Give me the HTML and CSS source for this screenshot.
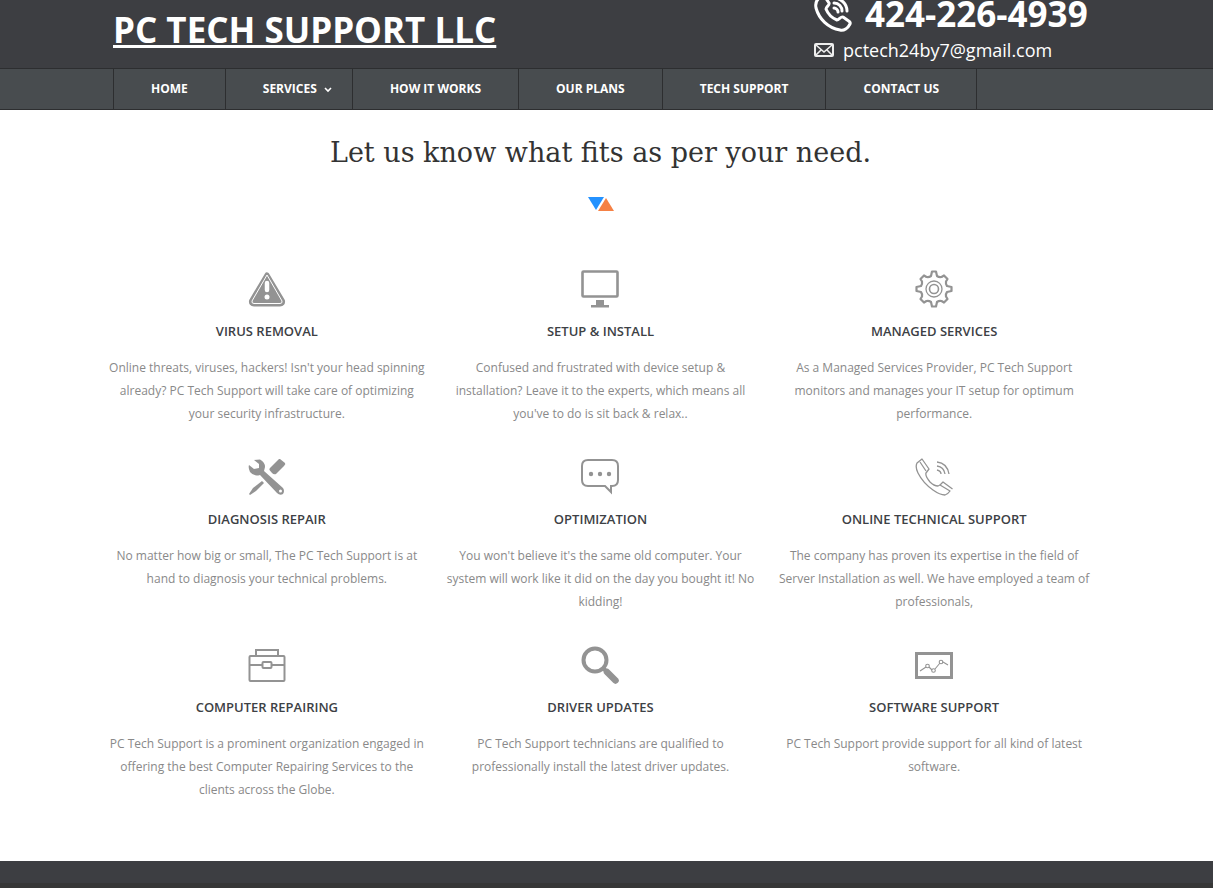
FILE: index.html
```html
<!DOCTYPE html>
<html lang="en">
<head>
<meta charset="utf-8">
<title>PC Tech Support LLC</title>
<link rel="stylesheet" href="styles.css">
</head>
<body>
<header class="header">
  <div class="container header-row">
    <a class="logo" href="#">PC TECH SUPPORT LLC</a>
    <div class="contact">
      <a class="phone" href="tel:4242264939">
        <svg class="phone-icon" viewBox="0 0 38 38" fill="none" stroke="#fff" stroke-width="3" stroke-linejoin="round" stroke-linecap="round"><path d="M7 3C3 5 1 9 2 14C5 25 14 34 26 36C30 37 34 34 36 30C37 28 35 27 29 23C27 22 25 26 23 26C18 24 14 20 12 15C12 13 16 11 15 9L11 3C10 1 9 2 7 3Z"/><path d="M20 4C27 4 33 10 33 17M20 9C25 9 28 13 28 17M20 14C22 14 24 16 24 18"/></svg>
        <span>424-226-4939</span>
      </a>
      <a class="email" href="mailto:pctech24by7@gmail.com">
        <svg class="email-icon" viewBox="0 0 20 14" fill="none" stroke="#eee" stroke-width="2"><rect x="1" y="1" width="18" height="12" rx="1"/><path d="M2 2L10 9L18 2M2 12L7 7M18 12L13 7" stroke-width="1.6"/></svg>
        <span>pctech24by7@gmail.com</span>
      </a>
    </div>
  </div>
</header>
<nav class="nav">
  <div class="container menu">
    <a href="#">HOME</a>
    <a class="has-menu" href="#">SERVICES <svg class="chevron" viewBox="0 0 8 6" fill="none" stroke="#fff" stroke-width="1.6"><path d="M1 1L4 4L7 1"/></svg></a>
    <a href="#">HOW IT WORKS</a>
    <a href="#">OUR PLANS</a>
    <a href="#">TECH SUPPORT</a>
    <a href="#">CONTACT US</a>
  </div>
</nav>
<main class="main">
  <h1 class="title">Let us know what fits as per your need.</h1>
  <svg class="divider" viewBox="0 0 26 14"><path d="M0 0H16L8 13Z" fill="#2492ff"/><path d="M10 14L18 1L26 14Z" fill="#f58145"/></svg>
  <div class="grid">
    <section class="card">
      <svg class="icon" viewBox="0 0 38 38"><path d="M19 5L34.500 31Q35 34 32 34H6Q3 34 3.500 31Z" fill="none" stroke="#939393" stroke-width="5" stroke-linejoin="round"/><path d="M19 5L34 31Q34.500 33.500 32 33.500H6Q3.500 33.500 4 31Z" fill="#939393" stroke="#fff" stroke-width="1" stroke-linejoin="round"/><path d="M19 13V20" stroke="#fff" stroke-width="4.500" stroke-linecap="round"/><circle cx="19" cy="27" r="2.500" fill="#fff"/></svg>
      <h2>VIRUS REMOVAL</h2>
      <p>Online threats, viruses, hackers! Isn't your head spinning already? PC Tech Support will take care of optimizing your security infrastructure.</p>
    </section>
    <section class="card">
      <svg class="icon" viewBox="0 0 38 38"><rect x="1.500" y="1.500" width="35" height="25" rx="1" fill="none" stroke="#939393" stroke-width="2.600"/><path d="M15 30H23V35H28V37.500H10V35H15Z" fill="#939393"/></svg>
      <h2>SETUP &amp; INSTALL</h2>
      <p>Confused and frustrated with device setup &amp; installation? Leave it to the experts, which means all you've to do is sit back &amp; relax..</p>
    </section>
    <section class="card">
      <svg class="icon" viewBox="0 0 38 38" fill="none" stroke="#939393" stroke-width="2.200" stroke-linejoin="round"><path d="M16 6L17 1.500H21L22 6Q24 7.500 26.500 7L29 5.500L32.500 9L31 11.500Q30.500 14 32 16L36.500 17V21L32 22Q30.500 24 31 26.500L32.500 29L29 32.500L26.500 31Q24 30.500 22 32L21 36.500H17L16 32Q14 30.500 11.500 31L9 32.500L5.500 29L7 26.500Q7.500 24 6 22L1.500 21V17L6 16Q7.500 14 7 11.500L5.500 9L9 5.500L11.500 7Q14 7.500 16 6Z"/><circle cx="19" cy="19" r="8" stroke-width="1.300"/><circle cx="19" cy="19" r="4.500" stroke-width="1.600"/></svg>
      <h2>MANAGED SERVICES</h2>
      <p>As a Managed Services Provider, PC Tech Support monitors and manages your IT setup for optimum performance.</p>
    </section>
    <section class="card">
      <svg class="icon" viewBox="0 0 38 38" fill="#939393"><path d="M6 2L12 1.500Q17 4 17 9L16 13L35 30Q37 33 35 36Q32 38 29 35L12 17Q6 19 2 14Q0 10 1 7L6 11L11 10L11 6Z"/><circle cx="32.500" cy="33" r="1.500" fill="#fff"/><path d="M32 1L37 5Q38 6 36 8L28 16Q26 17 24 15L21.500 12Q21 11 22 10L31 1Z"/><path d="M14 23L16 25L8 33L2 37L1 36L5 30Z"/></svg>
      <h2>DIAGNOSIS REPAIR</h2>
      <p>No matter how big or small, The PC Tech Support is at hand to diagnosis your technical problems.</p>
    </section>
    <section class="card">
      <svg class="icon" viewBox="0 0 38 38"><path d="M7 2H31Q37 2 37 8V22Q37 28 31 28H30V34L24 28H7Q1 28 1 22V8Q1 2 7 2Z" fill="none" stroke="#939393" stroke-width="2"/><g fill="#939393"><circle cx="10" cy="16" r="2.200"/><circle cx="19" cy="16" r="2.200"/><circle cx="28" cy="16" r="2.200"/></g></svg>
      <h2>OPTIMIZATION</h2>
      <p>You won't believe it's the same old computer. Your system will work like it did on the day you bought it! No kidding!</p>
    </section>
    <section class="card">
      <svg class="icon" viewBox="0 0 38 38" fill="none" stroke="#939393" stroke-width="1.300" stroke-linejoin="round"><path d="M7 1L2 5Q0 9 3 15Q8 25 18 32Q25 37 30 37Q33 36 35 33L25 27L23 28Q19 28 15 24Q10 18 11 15L14 11Z"/><path d="M5 4L11 13M25 27L28 24L37.500 31M22 4Q32 5 34 16M22 8Q29 9 30 16M22 12Q26 13 26 16"/></svg>
      <h2>ONLINE TECHNICAL SUPPORT</h2>
      <p>The company has proven its expertise in the field of Server Installation as well. We have employed a team of professionals,</p>
    </section>
    <section class="card">
      <svg class="icon" viewBox="0 0 38 38" fill="none" stroke="#939393" stroke-width="2"><rect x="1.500" y="10" width="35" height="25" rx="1"/><path d="M8 10V4H30V10M1 19H14M24 19H37"/><rect x="14.500" y="16" width="9" height="6" rx="1"/></svg>
      <h2>COMPUTER REPAIRING</h2>
      <p>PC Tech Support is a prominent organization engaged in offering the best Computer Repairing Services to the clients across the Globe.</p>
    </section>
    <section class="card">
      <svg class="icon" viewBox="0 0 38 38" fill="none" stroke="#939393"><circle cx="14" cy="14" r="11.500" stroke-width="4"/><path d="M22 22L25 25" stroke-width="4"/><path d="M26 26L34.500 34.500" stroke-width="6.500" stroke-linecap="round"/></svg>
      <h2>DRIVER UPDATES</h2>
      <p>PC Tech Support technicians are qualified to professionally install the latest driver updates.</p>
    </section>
    <section class="card">
      <svg class="icon" viewBox="0 0 38 38" fill="none" stroke="#939393"><rect x="1.500" y="7.500" width="35" height="24" stroke-width="3"/><g stroke-width="1.100"><path d="M5 25L11 21M14 21L17 24M20 23L25 17M28 16L33 19"/><circle cx="12.500" cy="20" r="1.800"/><circle cx="18.500" cy="24.500" r="1.800"/><circle cx="26" cy="16" r="1.800"/></g></svg>
      <h2>SOFTWARE SUPPORT</h2>
      <p>PC Tech Support provide support for all kind of latest software.</p>
    </section>
  </div>
</main>
<footer class="footer"></footer>
</body>
</html>
```
FILE: styles.css
```css
* { box-sizing: border-box; }
body {
  margin: 0;
  background: #fff;
  color: #898989;
  font: 12px/23px "Open Sans", sans-serif;
}
a { color: #fff; text-decoration: none; }
.header, .nav, .main { padding-right: 12px; }
.container { max-width: 975px; margin: 0 auto; }
.header { height: 68px; overflow: hidden; background: #3d3e42; }
.header-row { display: flex; justify-content: space-between; }
.logo {
  font-size: 35px;
  font-weight: 700;
  line-height: 60px;
  text-decoration: underline;
}
.contact { width: 274px; }
.phone {
  display: flex;
  align-items: center;
  gap: 13px;
  height: 26px;
  font-size: 35px;
  font-weight: 700;
}
.phone-icon { width: 38px; height: 38px; }
.email {
  display: flex;
  align-items: center;
  gap: 9px;
  margin-top: 12px;
  font-size: 18px;
  line-height: 24px;
}
.email-icon { width: 20px; height: 14px; }
.nav {
  background: #484c4f;
  border-top: 1px solid #2d2e30;
  border-bottom: 1px solid #2d2e30;
}
.menu { display: flex; border-left: 1px solid #2d2e30; }
.menu a {
  padding: 0 37px;
  border-right: 1px solid #2d2e30;
  font-weight: 700;
  line-height: 40px;
}
.menu .has-menu { padding-right: 20px; }
.chevron { width: 8px; height: 6px; margin-left: 4px; }
.main { padding-bottom: 60px; }
.title {
  margin: 0;
  padding-top: 23px;
  color: #333;
  font: 400 27px/40px "DejaVu Serif", serif;
  text-align: center;
}
.divider { display: block; width: 26px; height: 14px; margin: 24px auto 59px; }
.grid {
  display: grid;
  grid-template-columns: repeat(3, 1fr);
  gap: 33px 16px;
  max-width: 985px;
  margin: 0 auto;
  text-align: center;
}
.icon { display: block; width: 38px; height: 38px; margin: 0 auto; }
.card h2 {
  margin: 12px 0 13px;
  color: #3d4145;
  font-size: 13px;
  font-weight: 600;
  line-height: 23px;
}
.card p { margin: 0; }
.footer { height: 27px; background: #3d3e42; border-bottom: 5px solid #373737; }
```
